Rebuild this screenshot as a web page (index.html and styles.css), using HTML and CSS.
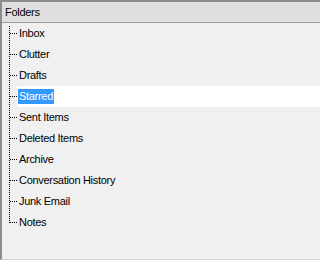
FILE: index.html
```html
<!DOCTYPE html>
<html>
<head>
<meta charset="utf-8">
<link rel="stylesheet" href="styles.css">
</head>
<body>
<div class="pane">
  <div class="header">Folders</div>
  <div class="tree">
    <div class="vline"></div>
    <div class="row"><span class="stub"></span><span class="label">Inbox</span></div>
    <div class="row"><span class="stub"></span><span class="label">Clutter</span></div>
    <div class="row"><span class="stub"></span><span class="label">Drafts</span></div>
    <div class="row selected"><span class="stub"></span><span class="label">Starred</span></div>
    <div class="row"><span class="stub"></span><span class="label">Sent Items</span></div>
    <div class="row"><span class="stub"></span><span class="label">Deleted Items</span></div>
    <div class="row"><span class="stub"></span><span class="label">Archive</span></div>
    <div class="row"><span class="stub"></span><span class="label">Conversation History</span></div>
    <div class="row"><span class="stub"></span><span class="label">Junk Email</span></div>
    <div class="row"><span class="stub"></span><span class="label">Notes</span></div>
  </div>
</div>
</body>
</html>
```
FILE: styles.css
```css
html, body {
  margin: 0;
  padding: 0;
  background: #f0f0f0;
}
.pane {
  width: 100%;
  height: 260px;
  box-sizing: border-box;
  border-left: 2px solid #8c8c8c;
  border-top: 2px solid #8c8c8c;
  border-bottom: 1px solid #d6d6d6;
  background: #f0f0f0;
  font-family: "Liberation Sans", Arial, sans-serif;
  font-size: 11px;
  color: #000;
  display: flex;
  flex-direction: column;
}
.header {
  height: 20px;
  line-height: 20px;
  background: #dfdfdf;
  border-bottom: 1px solid #a0a0a0;
  padding-left: 3px;
  letter-spacing: -0.3px;
}
.tree {
  position: relative;
}
.vline {
  position: absolute;
  left: 7px;
  top: 3px;
  height: 197px;
  width: 1px;
  background: repeating-linear-gradient(to bottom, #000 0 1px, transparent 1px 2px);
}
.row {
  height: 21px;
  display: flex;
  align-items: center;
}
.stub {
  width: 8px;
  height: 1px;
  margin-left: 8px;
  background: repeating-linear-gradient(to right, #000 0 1px, transparent 1px 2px);
}
.label {
  padding: 1px 1px;
  line-height: 13px;
  letter-spacing: -0.3px;
}
.row.selected {
  background: #ffffff;
  margin-left: 15px;
}
.row.selected .stub {
  margin-left: -7px;
}
.row.selected .label {
  background: #3399ff;
  color: #fff;
}
```
